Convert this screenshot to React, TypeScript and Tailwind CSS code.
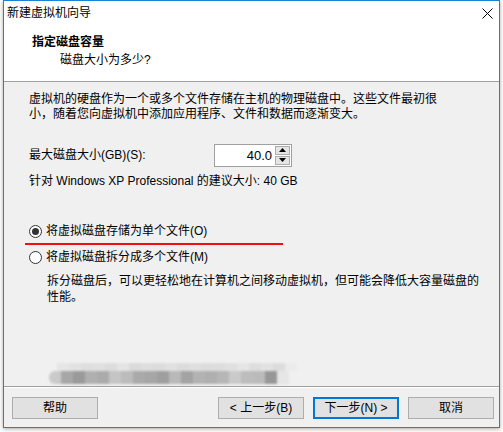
import React from "react";

const topRow = ["#e6e6e6","#e2e2e2","#dedede","#e0e0e0","#dcdcdc","#e4e4e4","#dadada","#dedede","#dcdcdc","#e0e0e0","#dbdbdb","#dfdfdf","#dcdcdc","#dddddd","#e0e0e0","#e5e5e5","#dedede","#e2e2e2","#dcdcdc","#ebebeb"];
const bottomRow = ["#cacaca","#a7a7a7","#9a9a9a","#b0b0b0","#ababab","#c5c5c5","#bcbcbc","#aaaaaa","#a6a6a6","#9f9f9f","#b9b9b9","#a3a3a3","#b3b3b3","#afafaf","#b6b6b6","#cacaca","#bdbdbd","#bbbbbb","#979797","#e6e6e6"];

function Radio({ checked }: { checked?: boolean }) {
  return (
    <span className="w-[13px] h-[13px] rounded-full border border-[#333333] bg-white flex items-center justify-center shrink-0">
      {checked && <span className="w-[7px] h-[7px] rounded-full bg-[#333333]" />}
    </span>
  );
}

function Btn({ children, primary }: { children: React.ReactNode; primary?: boolean }) {
  return (
    <div
      className={
        primary
          ? "w-[86px] h-[22px] border-2 border-[#0078d7] bg-[#e1e1e1] flex items-center justify-center text-[12px] text-black"
          : "w-[86px] h-[22px] border border-[#adadad] bg-[#e1e1e1] flex items-center justify-center text-[12px] text-black"
      }
    >
      {children}
    </div>
  );
}

export default function App() {
  return (
    <div className="w-[503px] h-[432px] bg-white pl-[3px] font-['Liberation_Sans','Noto_Sans_CJK_SC',sans-serif] text-black">
      <div className="w-[497px] h-[428px] border border-[#1883d7] bg-[#f0f0f0] flex flex-col shadow-[0_1px_4px_rgba(0,0,0,0.35)]">
        {/* header */}
        <div className="h-[81px] bg-white border-b border-[#a0a0a0] flex flex-col">
          <div className="h-[24px] flex items-center justify-between pl-[3px] pr-[6px] text-[12px]">
            <span>新建虚拟机向导</span>
            <svg width="11" height="11" viewBox="0 0 11 11">
              <path d="M0.5 0.5 L10.5 10.5 M10.5 0.5 L0.5 10.5" stroke="#000" strokeWidth="1" />
            </svg>
          </div>
          <div className="mt-[10px] pl-[28px] font-bold text-[12px] leading-[15px]">指定磁盘容量</div>
          <div className="mt-[3px] pl-[56px] text-[12px] leading-[15px]">磁盘大小为多少?</div>
        </div>

        {/* body */}
        <div className="flex-1 flex flex-col pl-[25px] pt-[10px] text-[12px] leading-[15px]">
          <div>虚拟机的硬盘作为一个或多个文件存储在主机的物理磁盘中。这些文件最初很</div>
          <div>小，随着您向虚拟机中添加应用程序、文件和数据而逐渐变大。</div>

          <div className="mt-[22px] h-[22px] flex items-center">
            <span className="w-[185px]">最大磁盘大小(GB)(S):</span>
            <div className="w-[78px] h-[23px] border border-[#a0a0a0] bg-white flex">
              <div className="flex-1 flex items-center justify-end pr-[3px] text-[13px]">40.0</div>
              <div className="w-[16px] flex flex-col gap-[1px] py-[1px] pr-[1px]">
                <div className="flex-1 border border-[#adadad] bg-[#e5e5e5] flex items-center justify-center">
                  <svg width="7" height="4" viewBox="0 0 7 4"><path d="M3.5 0 L7 4 L0 4 Z" fill="#000" /></svg>
                </div>
                <div className="flex-1 border border-[#adadad] bg-[#e5e5e5] flex items-center justify-center">
                  <svg width="7" height="4" viewBox="0 0 7 4"><path d="M0 0 L7 0 L3.5 4 Z" fill="#000" /></svg>
                </div>
              </div>
            </div>
          </div>

          <div className="mt-[8px]">针对 Windows XP Professional 的建议大小: 40 GB</div>

          <div className="mt-[35px] h-[15px] flex items-center gap-[4px]">
            <Radio checked />
            <span>将虚拟磁盘存储为单个文件(O)</span>
          </div>
          <div className="mt-[4px] ml-[-4px] w-[258px] h-[2px] bg-[#f01010]" />
          <div className="mt-[5px] h-[15px] flex items-center gap-[4px]">
            <Radio />
            <span>将虚拟磁盘拆分成多个文件(M)</span>
          </div>
          <div className="mt-[8px] pl-[18px] leading-[16px]">
            <div>拆分磁盘后，可以更轻松地在计算机之间移动虚拟机，但可能会降低大容量磁盘的</div>
            <div>性能。</div>
          </div>

          <div className="mt-auto mb-[2px] ml-[20px] flex flex-col blur-[1px]">
            <div className="flex h-[8px] pl-[8px]">
              {topRow.map((c, i) => (
                <div key={i} className="w-[12px] h-full" style={{ background: c }} />
              ))}
            </div>
            <div className="flex h-[13px]">
              {bottomRow.map((c, i) => (
                <div key={i} className={i === 0 ? "w-[12px] h-full rounded-l-[6px]" : "w-[12px] h-full"} style={{ background: c }} />
              ))}
            </div>
          </div>
        </div>

        {/* footer */}
        <div className="h-[1px] bg-[#a0a0a0]" />
        <div className="h-[1px] bg-white" />
        <div className="pt-[9px] pb-[8px] pl-[8px] pr-[5px] flex items-center">
          <Btn>帮助</Btn>
          <div className="flex-1" />
          <div className="flex gap-[9px]">
            <Btn>&lt; 上一步(B)</Btn>
            <Btn primary>下一步(N) &gt;</Btn>
            <Btn>取消</Btn>
          </div>
        </div>
      </div>
    </div>
  );
}
